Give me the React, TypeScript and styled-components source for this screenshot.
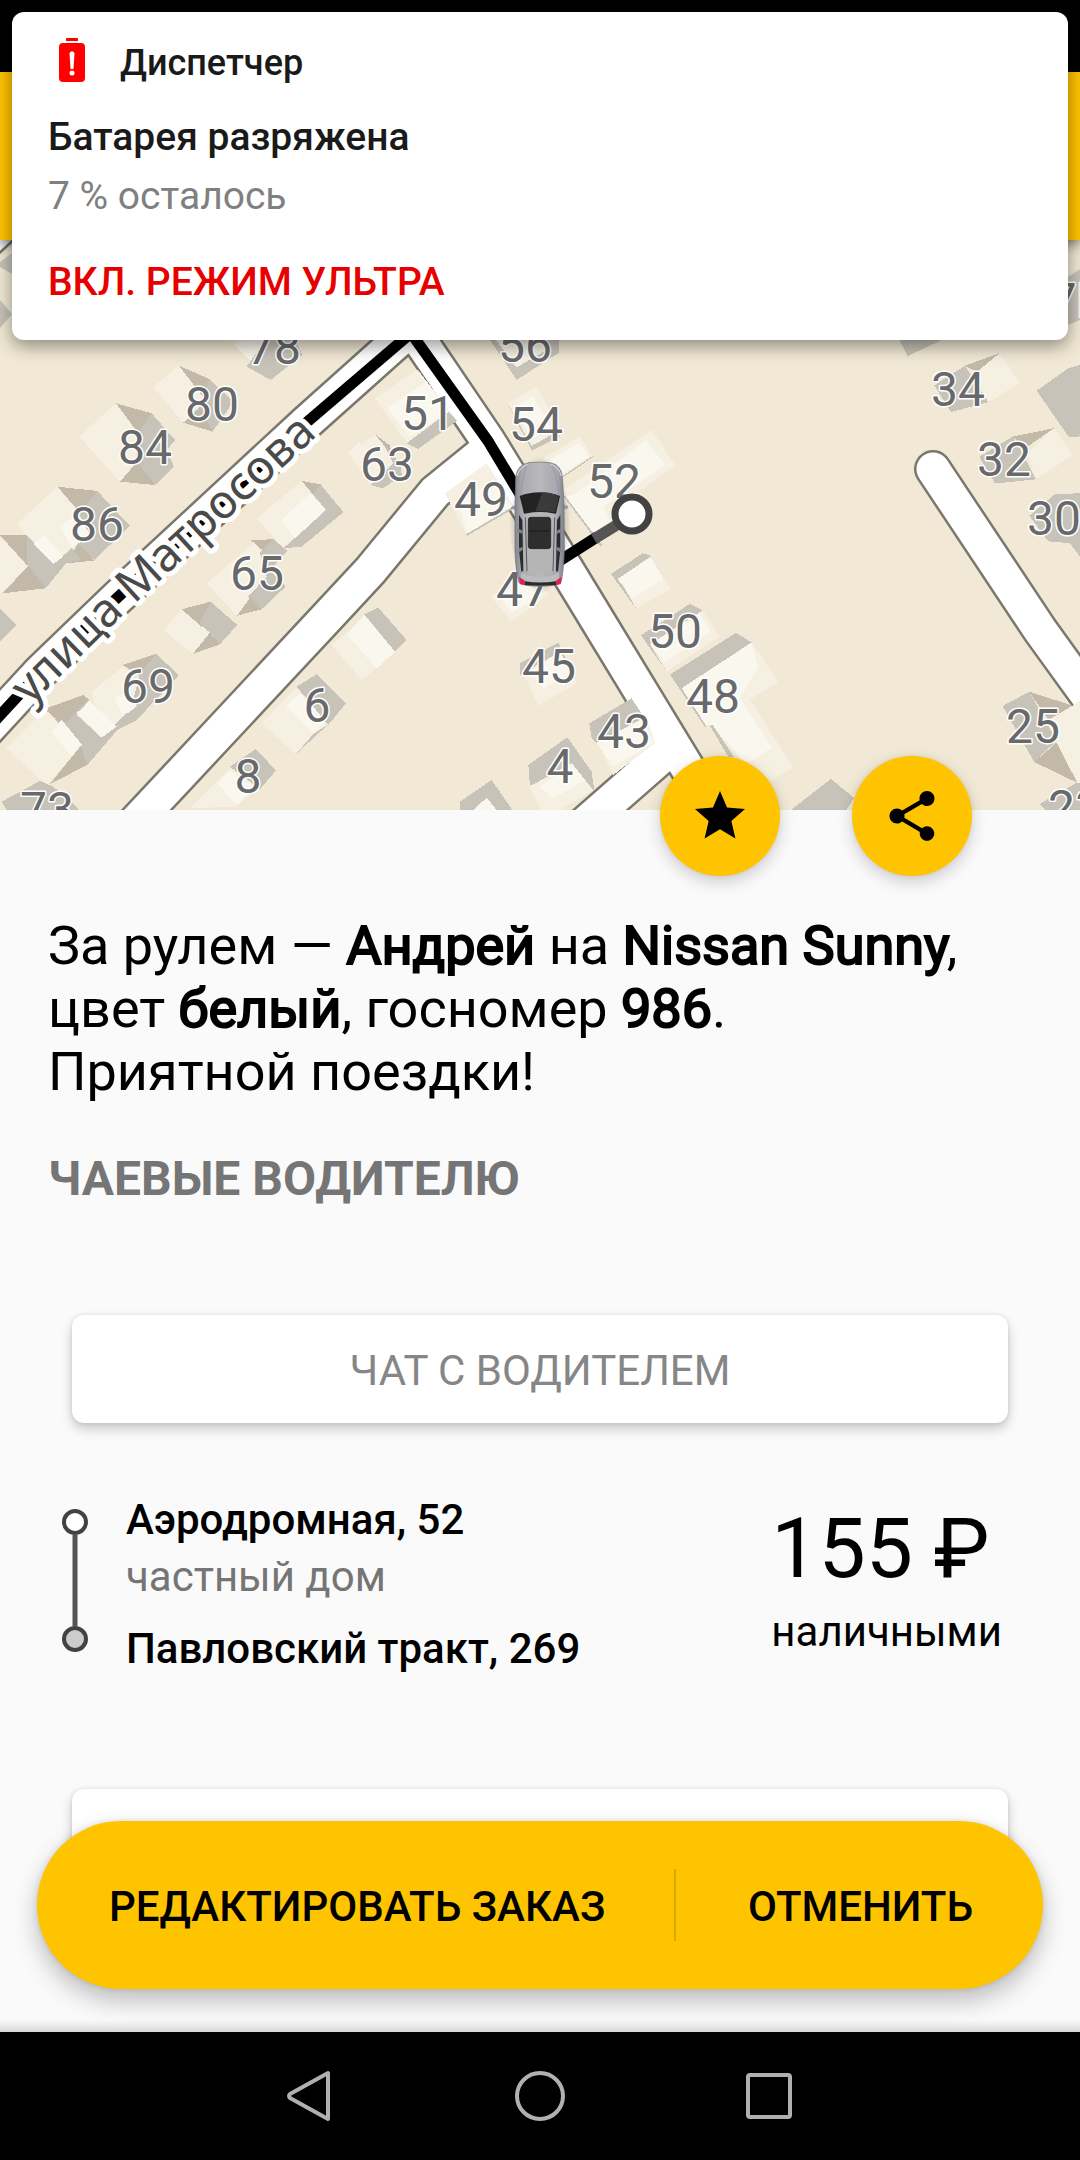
import React from 'react';
import styled, { createGlobalStyle } from 'styled-components';

const GlobalStyle = createGlobalStyle`
  *, *::before, *::after { box-sizing: border-box; }
  body {
    margin: 0;
    background: #fafafa;
    font-family: Roboto, "Noto Sans", sans-serif;
    color: #000;
  }
  h1, h2, p { margin: 0; font-weight: 400; }
  button { border: 0; padding: 0; margin: 0; font: inherit; color: inherit; background: none; cursor: pointer; }
`;

const Screen = styled.div`
  position: relative;
  min-height: 100vh;
  display: flex;
  flex-direction: column;
  overflow: hidden;
`;

const StatusBar = styled.div`
  height: 72px;
  background: #000;
`;

const AppBar = styled.header`
  position: relative;
  z-index: 1;
  height: 168px;
  background: #ffc400;
  box-shadow: 0 4px 12px rgba(0, 0, 0, 0.5);
`;

const MapView = styled.div`
  height: 570px;
  background: #f1e9d5;
  svg { display: block; width: 100%; height: 100%; }
`;

const Sheet = styled.main`
  position: relative;
  flex: 1;
  display: flex;
  flex-direction: column;
  padding: 0 72px 120px;
  background: #fafafa;

  &::after {
    content: '';
    position: absolute;
    left: 0;
    right: 0;
    bottom: 0;
    height: 12px;
    background: linear-gradient(to bottom, rgba(0, 0, 0, 0), rgba(0, 0, 0, 0.14));
  }
`;

const FabRow = styled.div`
  display: flex;
  justify-content: flex-end;
  gap: 72px;
  margin-top: -54px;
  padding-right: 36px;
`;

const Fab = styled.button`
  display: grid;
  place-items: center;
  width: 120px;
  height: 120px;
  border-radius: 50%;
  background: #ffc400;
  box-shadow: 0 6px 16px rgba(0, 0, 0, 0.18), 0 0 4px rgba(0, 0, 0, 0.08);
`;

const Summary = styled.h1`
  margin: 38px -24px 0;
  font-size: 54px;
  line-height: 63px;
`;

const Strong = styled.strong`
  font-weight: 400;
  -webkit-text-stroke: 2px currentColor;
`;

const TipsLink = styled.button`
  align-self: flex-start;
  margin: 48px -24px 0;
  font-size: 48px;
  line-height: 56px;
  font-weight: 700;
  color: #757575;
`;

const CardButton = styled.button<{ $gap: number }>`
  flex: none;
  height: 108px;
  margin-top: ${(p) => p.$gap}px;
  padding-top: 2px;
  border-radius: 12px;
  background: #fff;
  color: #868686;
  font-size: 42px;
  line-height: 49px;
  box-shadow: 0 6px 12px rgba(0, 0, 0, 0.2), 0 0 4px rgba(0, 0, 0, 0.1);
`;

const Trip = styled.section`
  display: flex;
  align-items: flex-start;
  margin: 72px -12px 0;
  font-size: 42px;
  line-height: 49px;
`;

const RouteMark = styled.svg`
  flex: none;
  width: 30px;
  height: 146px;
  margin-top: 12px;
`;

const Stops = styled.div`
  flex: 1;
  display: grid;
  gap: 8px;
  padding-left: 36px;
`;

const Stop = styled.p<{ $last?: boolean }>`
  font-weight: 500;
  padding-top: ${(p) => (p.$last ? 15 : 0)}px;
`;

const StopNote = styled.p`
  color: #757575;
`;

const Fare = styled.div`
  display: grid;
  justify-items: start;
  gap: 9px;
  padding: 5px 18px 0 0;
`;

const Price = styled.p`
  font-size: 84px;
  line-height: 98px;
`;

const ActionBar = styled.div`
  position: absolute;
  z-index: 1;
  left: 37px;
  right: 37px;
  bottom: 43px;
  display: flex;
  align-items: center;
  height: 168px;
  border-radius: 84px;
  background: #ffc400;
  box-shadow: 0 12px 24px rgba(0, 0, 0, 0.24), 0 0 6px rgba(0, 0, 0, 0.12);
`;

const Action = styled.button`
  height: 100%;
  padding: 2px 70px 0 72px;
  font-size: 42px;
  line-height: 49px;
  font-weight: 500;
  white-space: nowrap;
`;

const WideAction = styled(Action)`
  flex: 1 1 0;
  min-width: 0;
  text-align: left;
`;

const Divider = styled.span`
  flex: none;
  width: 2px;
  height: 72px;
  background: #dba800;
`;

const NavBar = styled.nav`
  display: flex;
  justify-content: center;
  gap: 154px;
  height: 128px;
  background: #000;
`;

const NavButton = styled.button`
  display: grid;
  place-items: center;
  width: 76px;
`;

const Notice = styled.aside`
  position: absolute;
  z-index: 2;
  top: 12px;
  left: 12px;
  right: 12px;
  height: 328px;
  padding: 24px 36px 0;
  border-radius: 12px;
  background: #fff;
  color: #1a1a1a;
  font-size: 39px;
  line-height: 46px;
  box-shadow: 0 6px 18px rgba(0, 0, 0, 0.42);
`;

const NoticeHead = styled.div`
  display: flex;
  align-items: center;
  gap: 24px;
  height: 54px;
  margin-bottom: 24px;
  font-size: 36px;
  line-height: 42px;
  font-weight: 500;
`;

const NoticeTitle = styled.h2`
  margin-bottom: 13px;
  font-size: 39px;
  font-weight: 500;
`;

const NoticeText = styled.p`
  margin-bottom: 40px;
  color: #808080;
`;

const NoticeAction = styled.button`
  font-weight: 500;
  color: #e60000;
`;

const HouseText = styled.text`
  font-family: Roboto, sans-serif;
  font-size: 48px;
  text-anchor: middle;
  fill: #68696b;
  stroke: #fff;
  stroke-width: 3px;
  stroke-linejoin: round;
  paint-order: stroke;
`;

const StreetText = styled.text`
  font-family: "Noto Sans", sans-serif;
  font-size: 47px;
  fill: #4a4a4a;
  stroke: #fff;
  stroke-width: 10px;
  stroke-linejoin: round;
  paint-order: stroke;
`;

type Tone = 'base' | 'roof' | 'wall' | 'shade';
type Block = [Tone, string];

const tones: Record<Tone, string> = {
  base: '#f6f0e2',
  roof: '#faf7ee',
  wall: '#c7c3b9',
  shade: '#c3b9a9',
};

const westBlocks: Block[] = [
  ['base', '680,20 800,20 765,105'],
  ['roof', '705,45 745,20 800,20 758,100'],
  ['wall', '740,110 812,150 907,75 880,20 800,20 775,60'],
  ['base', '460,170 537,107 612,200 550,280'],
  ['shade', '537,107 628,147 660,200 612,205'],
  ['wall', '628,147 700,215 638,305 590,245 612,200'],
  ['shade', '550,278 638,305 600,232'],
  ['base', '238,320 348,220 430,310 410,420 360,455'],
  ['shade', '348,220 455,250 440,310 415,310'],
  ['wall', '455,250 525,330 500,360 522,410 465,465 400,420 420,300'],
  ['shade', '360,455 465,465 412,395'],
  ['base', '50,583 172,470 240,550 215,660 160,700 100,640'],
  ['shade', '172,470 292,483 250,560'],
  ['wall', '292,483 390,588 283,690 225,640 215,575'],
  ['shade', '283,692 200,700 235,640'],
  ['roof', '180,590 235,550 270,615 215,655'],
  ['base', '0,622 82,707 10,785 0,790'],
  ['shade', '0,615 80,615 110,650 82,707'],
  ['wall', '80,615 160,702 215,655 245,690 200,698 137,775 80,700'],
  ['roof', '100,640 135,615 190,680 160,702'],
  ['shade', '8,790 137,775 85,707'],
  ['wall', '0,835 50,885 0,935'],
  ['base', '770,565 905,453 978,540 850,655'],
  ['wall', '905,453 962,463 1030,547 905,650 850,655 978,540'],
  ['shade', '905,453 962,463 940,492'],
  ['roof', '842,572 930,490 978,540 885,625'],
  ['base', '620,760 765,635 850,770 712,857'],
  ['shade', '752,630 820,628 862,663 800,672'],
  ['wall', '820,628 862,663 810,720 857,770 785,838 745,800 800,740 780,668'],
  ['shade', '712,857 785,838 752,800'],
  ['base', '490,900 545,838 632,910 578,972'],
  ['shade', '545,838 632,815 605,890'],
  ['wall', '632,815 712,885 660,943 632,910 598,880'],
  ['shade', '578,972 660,943 630,908'],
  ['base', '275,1085 370,1010 440,1085 350,1195 300,1190'],
  ['shade', '368,1005 468,972 430,1045'],
  ['wall', '468,972 537,1035 410,1170 352,1200 400,1110 420,1030'],
  ['roof', '345,1105 385,1080 410,1130 370,1160'],
  ['base', '18,1255 135,1140 245,1245 140,1365'],
  ['wall', '250,1095 268,1110 230,1155 305,1222 380,1150 410,1170 352,1200 262,1305 240,1290 235,1230 165,1170'],
  ['shade', '133,1137 250,1095 265,1107 190,1185'],
  ['roof', '230,1150 268,1113 350,1190 305,1223'],
  ['roof', '155,1205 185,1170 247,1245 215,1280'],
  ['shade', '150,1362 262,1305 242,1248'],
  ['wall', '5,1415 120,1353 160,1370 235,1435 232,1440 20,1440'],
  ['base', '785,1180 890,1075 985,1180 888,1272'],
  ['roof', '858,1130 900,1090 980,1170 940,1210'],
  ['wall', '890,1070 950,1033 1038,1120 985,1185'],
  ['wall', '985,1183 888,1272 940,1213'],
  ['base', '570,1435 690,1315 775,1370 710,1430'],
  ['roof', '650,1360 692,1322 760,1372 712,1425'],
  ['wall', '690,1310 768,1257 828,1322 780,1378'],
  ['base', '1045,365 1080,335 1080,415'],
];

const midBlocks: Block[] = [
  ['wall', '480,30 560,150 687,68 687,20'],
  ['base', '490,20 560,112 650,60 640,20'],
  ['base', '135,205 262,118 380,270 232,340'],
  ['wall', '230,340 265,357 382,272 356,245'],
  ['roof', '173,235 288,155 356,245 240,322'],
  ['base', '55,370 135,315 205,395 125,465'],
  ['shade', '135,313 178,345 195,385'],
  ['wall', '165,350 212,400 215,435 160,475 122,465 190,400'],
  ['wall', '533,222 606,362 690,320 665,280'],
  ['base', '533,220 620,170 690,300 605,348'],
  ['roof', '552,232 608,200 662,290 604,330'],
  ['base', '345,490 470,400 552,530 410,615'],
  ['roof', '385,525 490,450 545,530 412,610'],
  ['wall', '408,613 552,528 552,535 412,617'],
  ['base', '640,385 750,320 788,380 700,440'],
  ['roof', '655,392 748,338 778,380 700,430'],
  ['wall', '698,438 788,378 788,382 700,442'],
  ['base', '700,480 965,300 1037,405 842,545 865,600 808,640'],
  ['roof', '735,492 948,330 1005,405 820,530 850,590 795,625 705,500'],
  ['wall', '700,498 706,498 818,648 812,650'],
  ['base', '938,675 1025,775 920,835 860,745'],
  ['wall', '843,732 938,670 965,678 866,745 920,838'],
  ['roof', '862,747 962,682 1000,745 910,805'],
  ['base', '483,800 560,745 660,790 545,875'],
  ['roof', '510,800 570,755 640,790 545,850'],
  ['wall', '570,1000 685,938 740,1060 720,1040 600,1025 570,1035'],
  ['base', '580,1030 690,965 740,1060 625,1128'],
  ['roof', '597,1025 692,965 722,1030 640,1075'],
  ['base', '800,1235 950,1160 975,1240 850,1335'],
  ['wall', '778,1180 905,1105 955,1180 800,1240 785,1225'],
  ['roof', '800,1238 940,1165 970,1240 850,1310'],
  ['wall', '595,1305 712,1222 785,1325 793,1380 700,1340 600,1367'],
  ['base', '598,1370 725,1300 790,1380 690,1440 635,1440'],
  ['roof', '630,1370 730,1305 765,1350 670,1405'],
  ['wall', '390,1415 485,1350 547,1440 390,1440'],
  ['roof', '430,1440 470,1403 500,1440'],
  ['wall', '0,500 40,545 0,580'],
  ['base', '5,945 60,900 145,1010 95,1050'],
  ['roof', '50,912 103,855 195,965 140,1015'],
  ['wall', '103,853 145,833 230,930 195,965'],
];

const eastBlocks: Block[] = [
  ['wall', '3,855 150,767 188,785 30,880 75,950'],
  ['base', '188,785 238,860 80,955 30,880'],
  ['roof', '30,880 180,795 212,845 75,930'],
  ['base', '335,875 415,985 330,1035 460,1225 370,1275 210,1108'],
  ['roof', '125,1003 335,875 355,945 300,1030 395,1170 320,1215 215,1105 195,1110'],
  ['wall', '90,965 288,848 335,875 125,1003 200,1110 195,1112'],
  ['wall', '210,1108 218,1106 282,1195 265,1195'],
  ['base', '1078,65 1140,148 1045,202 1000,120'],
  ['wall', '883,155 975,100 1045,202 933,230'],
  ['shade', '975,100 1078,65 1010,118'],
  ['wall', '775,20 925,20 803,73'],
  ['wall', '1190,170 1285,107 1320,98 1320,298 1287,300'],
  ['base', '1242,275 1298,350 1188,418 1160,345'],
  ['wall', '1018,355 1120,298 1188,418 1065,430'],
  ['shade', '1120,298 1242,275 1150,335'],
  ['wall', '1168,520 1245,460 1320,457 1320,635 1290,597 1225,592'],
  ['base', '1298,1052 1330,1030 1330,1268 1312,1268 1240,1140 1225,1095'],
  ['wall', '1088,1053 1168,1013 1250,1150 1183,1210'],
  ['shade', '1168,1013 1298,1052 1225,1092'],
  ['shade', '1183,1210 1250,1155 1312,1268'],
  ['wall', '1198,1328 1310,1268 1320,1270 1320,1344 1215,1344'],
  ['wall', '453,1344 573,1257 642,1310 620,1344'],
];

const houses: [string, number, number][] = [
  ['78', 274, 364], ['80', 212, 421], ['84', 145, 464], ['86', 97, 541],
  ['65', 257, 590], ['69', 148, 703], ['6', 317, 722], ['8', 248, 793],
  ['73', 47, 826], ['56', 525, 362], ['51', 428, 430], ['54', 536, 441],
  ['63', 387, 481], ['52', 614, 498], ['49', 481, 516], ['47', 523, 606],
  ['50', 675, 648], ['45', 549, 683], ['43', 624, 748], ['4', 560, 783],
  ['34', 958, 406], ['32', 1004, 476], ['30', 1054, 535], ['48', 713, 713],
  ['25', 1033, 743], ['23', 1075, 824], ['7Б', 1078, 317],
];

const roads = [
  'M-30 748 L40 672 L117 598 L307 422 L411 329 L423 345 L488 441 L562 562 L730 838',
  'M488 449 L435 492 L370 571 L330 614 L175 780 L130 828',
  'M580 828 L661 757 L673 747',
  'M933 469 L1040 630 L1100 713',
  'M-30 256 L10 219',
];

function Blocks({ items }: { items: Block[] }) {
  return (
    <>
      {items.map(([tone, points]) => (
        <polygon key={points} points={points} fill={tones[tone]} />
      ))}
    </>
  );
}

function Car() {
  return (
    <g transform="translate(480 440) scale(0.3333)">
      <defs>
        <linearGradient id="body" x1="0" x2="1" y1="0" y2="0">
          <stop offset="0" stopColor="#84848f" />
          <stop offset="0.14" stopColor="#a9a9b0" />
          <stop offset="0.5" stopColor="#b9b9bb" />
          <stop offset="0.86" stopColor="#a6a6ae" />
          <stop offset="1" stopColor="#80808b" />
        </linearGradient>
        <radialGradient id="ground">
          <stop offset="0.7" stopColor="#000" stopOpacity="0.22" />
          <stop offset="1" stopColor="#000" stopOpacity="0" />
        </radialGradient>
      </defs>
      <ellipse cx="180" cy="255" rx="92" ry="208" fill="url(#ground)" />
      <path d="M106 196l-11 5v6l12 1zM250 194l13 5v6l-13 2z" fill="#9a9aa5" stroke="#6e6e78" strokeWidth="1" />
      <path
        d="M146 68Q178 64 210 68Q244 74 247 110L252 190L253 330Q251 395 243 428Q238 437 180 439Q122 437 117 428Q107 395 105 330L105 190L107 110Q112 74 146 68Z"
        fill="url(#body)"
        stroke="#6f6f7b"
        strokeWidth="2"
      />
      <path d="M111 108Q117 83 143 73M244 108Q238 83 213 73" fill="none" stroke="#dcdce2" strokeWidth="3" />
      <path d="M140 76Q126 110 124 162M216 76Q232 110 236 162" fill="none" stroke="#8f8f9a" strokeWidth="2" />
      <path d="M119 168Q178 146 240 168L228 221Q180 211 132 221Z" fill="#232323" />
      <path d="M187 157Q215 158 236 168L226 217Q198 213 166 214Z" fill="#3a3a3b" />
      <path d="M117 225L127 240L130 392L124 396L117 330ZM241 225L231 240L228 392L234 396L241 330Z" fill="#2b2c30" />
      <path d="M113 264l14 8v9l-14-4zM245 264l-14 8v9l14-4zM114 325l14-4v9l-13 8zM244 325l-14-4v9l13 8z" fill="#81818c" />
      <path d="M131 224Q180 210 228 224L225 392L216 400L143 400L133 392Z" fill="#b5b5b6" />
      <path d="M136 232L141 394M224 232L219 394" stroke="#55565a" strokeWidth="3" fill="none" />
      <rect x="145" y="232" width="67" height="94" rx="8" fill="#2e2e2f" stroke="#181818" strokeWidth="2" />
      <path d="M148 273H209" stroke="#111" strokeWidth="2" />
      <path d="M124 398Q180 424 236 398L238 420Q180 433 121 420Z" fill="#bcbcbe" />
      <path d="M133 424Q180 431 229 424L228 435Q180 440 134 435Z" fill="#2b2b2c" />
      <path d="M117 411L133 421L134 435L120 432ZM245 411L229 421L228 435L242 432Z" fill="#e0224e" />
    </g>
  );
}

function CityMap() {
  return (
    <svg viewBox="0 240 1080 570" preserveAspectRatio="xMidYMid slice" role="img" aria-label="Карта">
      <defs>
        <path id="street" d="M30 706 L51 685 L128 610 L318 435 L422 342" />
      </defs>
      <g fill="none" strokeLinecap="round" strokeLinejoin="miter">
        {roads.map((d) => <path key={d} d={d} stroke="#7a776c" strokeWidth="38" />)}
        {roads.map((d) => <path key={d} d={d} stroke="#fff" strokeWidth="33" />)}
      </g>
      <g transform="translate(0 330) scale(0.3333)" shapeRendering="crispEdges"><Blocks items={westBlocks} /></g>
      <g transform="translate(330 330) scale(0.3333)" shapeRendering="crispEdges"><Blocks items={midBlocks} /></g>
      <g transform="translate(640 330) scale(0.3333 0.3571)" shapeRendering="crispEdges"><Blocks items={eastBlocks} /></g>
      <path d="M0 262L12 253V274L0 267ZM0 300L12 314L0 328ZM1068 277L1080 269V320L1068 325Z" fill="#c7c3b9" />
      <path
        d="M-30 748 L40 672 L117 598 L307 422 L411 333 L488 441 L550 544 L550 567 L597 537"
        fill="none"
        stroke="#000"
        strokeWidth="11"
      />
      <path d="M594 539 L620 523" stroke="#555" strokeWidth="11" />
      <StreetText><textPath href="#street">улица Матросова</textPath></StreetText>
      {houses.map(([label, x, y]) => <HouseText key={label} x={x} y={y}>{label}</HouseText>)}
      <circle cx="632" cy="514" r="17" fill="#fff" stroke="#424242" strokeWidth="7" />
      <Car />
    </svg>
  );
}

export default function App() {
  return (
    <>
      <GlobalStyle />
      <Screen>
        <StatusBar />
        <AppBar />
        <MapView><CityMap /></MapView>

        <Sheet>
          <FabRow>
            <Fab aria-label="В избранное">
              <svg width="60" height="60" viewBox="0 0 24 24">
                <path d="M12 17.27L18.18 21l-1.64-7.03L22 9.24l-7.19-.61L12 2 9.19 8.63 2 9.24l5.46 4.73L5.82 21z" />
              </svg>
            </Fab>
            <Fab aria-label="Поделиться">
              <svg width="60" height="60" viewBox="0 0 24 24">
                <path d="M18 16.08c-.76 0-1.44.3-1.96.77L8.91 12.7c.05-.23.09-.46.09-.7s-.04-.47-.09-.7l7.05-4.11c.54.5 1.25.81 2.04.81 1.66 0 3-1.34 3-3s-1.34-3-3-3-3 1.34-3 3c0 .24.04.47.09.7L8.04 9.81C7.5 9.31 6.79 9 6 9c-1.66 0-3 1.34-3 3s1.34 3 3 3c.79 0 1.5-.31 2.04-.81l7.12 4.16c-.05.21-.08.43-.08.65 0 1.61 1.31 2.92 2.92 2.92s2.92-1.31 2.92-2.92-1.31-2.92-2.92-2.92z" />
              </svg>
            </Fab>
          </FabRow>

          <Summary>
            За рулем — <Strong>Андрей</Strong> на <Strong>Nissan Sunny</Strong>,<br />
            цвет <Strong>белый</Strong>, госномер <Strong>986</Strong>.<br />
            Приятной поездки!
          </Summary>

          <TipsLink>ЧАЕВЫЕ ВОДИТЕЛЮ</TipsLink>

          <CardButton $gap={108}>ЧАТ С ВОДИТЕЛЕМ</CardButton>

          <Trip>
            <RouteMark viewBox="0 0 30 146">
              <path d="M15 28V119" stroke="#555" strokeWidth="5" />
              <circle cx="15" cy="15" r="11" fill="#fff" stroke="#424242" strokeWidth="4" />
              <circle cx="15" cy="132" r="11" fill="#ccc" stroke="#424242" strokeWidth="4" />
            </RouteMark>
            <Stops>
              <Stop>Аэродромная, 52</Stop>
              <StopNote>частный дом</StopNote>
              <Stop $last>Павловский тракт, 269</Stop>
            </Stops>
            <Fare>
              <Price>155 ₽</Price>
              <p>наличными</p>
            </Fare>
          </Trip>

          <CardButton $gap={116} aria-label="Ещё" />

          <ActionBar>
            <WideAction>РЕДАКТИРОВАТЬ ЗАКАЗ</WideAction>
            <Divider />
            <Action>ОТМЕНИТЬ</Action>
          </ActionBar>
        </Sheet>

        <NavBar>
          <NavButton aria-label="Назад">
            <svg width="54" height="54" viewBox="0 0 54 54" fill="none" stroke="#b0b0b0" strokeWidth="4" strokeLinejoin="round">
              <path d="M45 4V50L7 29Q5 27 7 25Z" />
            </svg>
          </NavButton>
          <NavButton aria-label="Домой">
            <svg width="54" height="54" viewBox="0 0 54 54" fill="none" stroke="#b0b0b0" strokeWidth="4">
              <circle cx="27" cy="27" r="23" />
            </svg>
          </NavButton>
          <NavButton aria-label="Последние приложения">
            <svg width="54" height="54" viewBox="0 0 54 54" fill="none" stroke="#b0b0b0" strokeWidth="4">
              <rect x="5" y="6" width="42" height="42" rx="2" />
            </svg>
          </NavButton>
        </NavBar>

        <Notice>
          <NoticeHead>
            <svg width="48" height="54" viewBox="0 0 48 54">
              <path d="M19 2h10a1 1 0 0 1 1 1v2H18V3a1 1 0 0 1 1-1z" fill="#f00" />
              <rect x="11" y="7" width="26" height="39" rx="4" fill="#f00" />
              <path d="M21.5 17q2.500-3.500 5 0l-1 16h-3z" fill="#fff" />
              <circle cx="24" cy="37" r="2.500" fill="#fff" />
            </svg>
            <span>Диспетчер</span>
          </NoticeHead>
          <NoticeTitle>Батарея разряжена</NoticeTitle>
          <NoticeText>7 % осталось</NoticeText>
          <NoticeAction>ВКЛ. РЕЖИМ УЛЬТРА</NoticeAction>
        </Notice>
      </Screen>
    </>
  );
}
